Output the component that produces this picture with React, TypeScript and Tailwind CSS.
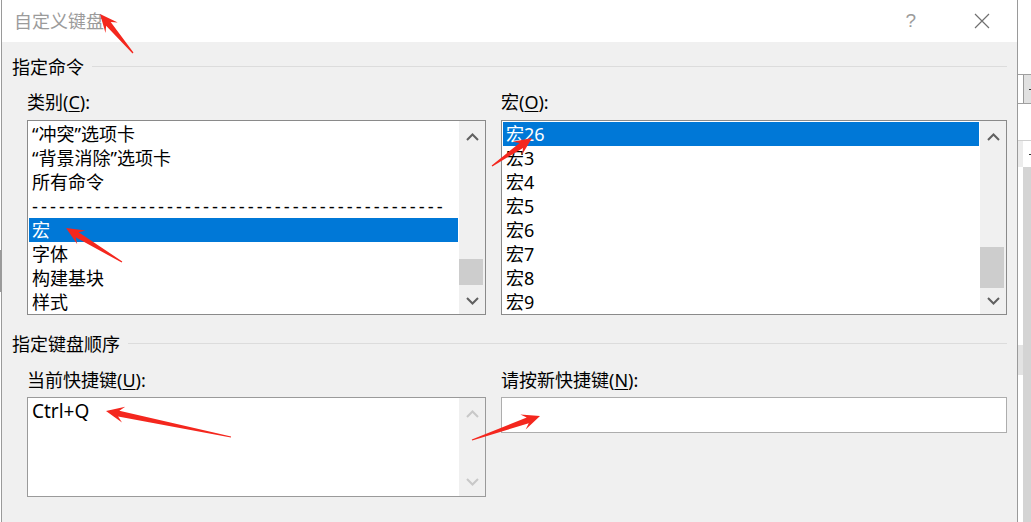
import React from "react";

const leftRows = [
  "“冲突”选项卡",
  "“背景消除”选项卡",
  "所有命令",
  "---",
  "宏",
  "字体",
  "构建基块",
  "样式",
];
const rightRows = ["宏26", "宏3", "宏4", "宏5", "宏6", "宏7", "宏8", "宏9"];

function Chevron({ up, color }: { up?: boolean; color: string }) {
  return (
    <svg width="13" height="8" viewBox="0 0 13 8">
      <path
        d={up ? "M1 7 L6.5 1.5 L12 7" : "M1 1 L6.5 6.5 L12 1"}
        fill="none"
        stroke={color}
        strokeWidth="2"
      />
    </svg>
  );
}

function ScrollBar({ thumbTop, thumbH }: { thumbTop: number; thumbH: number }) {
  return (
    <div className="w-[26px] bg-[#f0f0f0] flex flex-col">
      <div className="h-[32px] flex items-center justify-center">
        <Chevron up color="#606060" />
      </div>
      <div className="flex-1">
        <div className="w-[24px] bg-[#cdcdcd]" style={{ marginTop: thumbTop, height: thumbH }} />
      </div>
      <div className="h-[26px] flex items-center justify-center">
        <Chevron color="#606060" />
      </div>
    </div>
  );
}

function ListBox({
  rows,
  selected,
  thumbTop,
  thumbH,
}: {
  rows: string[];
  selected: number;
  thumbTop: number;
  thumbH: number;
}) {
  return (
    <div className="h-[195px] border border-[#8a8a8a] bg-white flex">
      <div className="flex-1 pt-px pl-px pr-px">
        {rows.map((r, i) => (
          <div
            key={i}
            className={
              i === selected
                ? "h-[24px] leading-[24px] pl-[3px] bg-[#0078d7] text-white whitespace-nowrap"
                : "h-[24px] leading-[24px] pl-[3px] whitespace-nowrap"
            }
          >
            {r === "---" ? (
              <span className="font-['Liberation_Sans',sans-serif] tracking-[3px]">
                {"-".repeat(46)}
              </span>
            ) : (
              r
            )}
          </div>
        ))}
      </div>
      <ScrollBar thumbTop={thumbTop} thumbH={thumbH} />
    </div>
  );
}

function GroupHeader({ label }: { label: string }) {
  return (
    <div className="ml-[10px] mr-[10px] h-[24px] flex items-center">
      <span className="leading-[24px]">{label}</span>
      <div className="flex-1 h-px bg-[#dcdcdc] ml-[8px] -mt-[2px]" />
    </div>
  );
}

function Arrow({ t, p }: { t: [number, number]; p: [number, number] }) {
  const dx = p[0] - t[0];
  const dy = p[1] - t[1];
  const L = Math.hypot(dx, dy);
  const ux = dx / L;
  const uy = dy / L;
  const nx = -uy;
  const ny = ux;
  const h = 18;
  const j = 13;
  const w1 = 3;
  const w2 = 8;
  const pt = (back: number, side: number, base: [number, number]) =>
    `${base[0] - ux * back + nx * side},${base[1] - uy * back + ny * side}`;
  const pts = [
    pt(0, 0.6, t),
    pt(j, w1, p),
    pt(h, w2, p),
    pt(0, 0, p),
    pt(h, -w2, p),
    pt(j, -w1, p),
    pt(0, -0.6, t),
  ].join(" ");
  return <polygon points={pts} fill="#f4271e" />;
}

export default function App() {
  return (
    <div className="w-[1031px] h-[522px] flex bg-white overflow-hidden relative font-['Noto_Sans','Noto_Sans_CJK_SC',sans-serif] text-[18px] text-black">
      {/* app behind, left edge */}
      <div className="w-px h-full flex flex-col">
        <div className="h-[250px]" />
        <div className="h-[42px] bg-[#9a9a9a]" />
      </div>

      {/* dialog */}
      <div className="w-[1017px] h-full border-x border-[#9a9a9a] bg-[#f0f0f0] flex flex-col">
        <div className="h-[42px] bg-white flex items-center pl-[12px]">
          <span className="text-[#9b9b9b] leading-[24px]">自定义键盘</span>
          <span className="ml-auto text-[#9b9b9b] font-light font-['Liberation_Sans',sans-serif] text-[19px] leading-[24px]">
            ?
          </span>
          <div className="ml-[58px] mr-[27px] flex items-center">
            <svg width="16" height="16" viewBox="0 0 16 16">
              <path d="M1 1 L15 15 M15 1 L1 15" stroke="#707070" strokeWidth="1.2" fill="none" />
            </svg>
          </div>
        </div>

        <div className="mt-[13px]">
          <GroupHeader label="指定命令" />
        </div>

        <div className="ml-[25px] flex gap-[15px] mt-[11px]">
          <div className="w-[459px] flex flex-col">
            <div className="h-[24px] leading-[24px]">
              类别(<span className="underline underline-offset-2">C</span>):
            </div>
            <div className="mt-[6px]">
              <ListBox rows={leftRows} selected={4} thumbTop={106} thumbH={26} />
            </div>
          </div>
          <div className="w-[506px] flex flex-col">
            <div className="h-[24px] leading-[24px]">
              宏(<span className="underline underline-offset-2">O</span>):
            </div>
            <div className="mt-[6px]">
              <ListBox rows={rightRows} selected={0} thumbTop={94} thumbH={41} />
            </div>
          </div>
        </div>

        <div className="mt-[17px]">
          <GroupHeader label="指定键盘顺序" />
        </div>

        <div className="ml-[25px] flex gap-[15px] mt-[12px]">
          <div className="w-[459px] flex flex-col">
            <div className="h-[24px] leading-[24px]">
              当前快捷键(<span className="underline underline-offset-2">U</span>):
            </div>
            <div className="mt-[5px] h-[100px] border border-[#9a9a9a] bg-white flex">
              <div className="flex-1 pt-px pl-[4px] leading-[24px] text-[19px]">Ctrl+Q</div>
              <div className="w-[26px] bg-[#f0f0f0] flex flex-col">
                <div className="h-[32px] flex items-center justify-center">
                  <Chevron up color="#c8c8c8" />
                </div>
                <div className="flex-1" />
                <div className="h-[28px] flex items-center justify-center">
                  <Chevron color="#c8c8c8" />
                </div>
              </div>
            </div>
          </div>
          <div className="w-[506px] flex flex-col">
            <div className="h-[24px] leading-[24px]">
              请按新快捷键(<span className="underline underline-offset-2">N</span>):
            </div>
            <div className="mt-[5px] h-[36px] border border-[#adadad] bg-white" />
          </div>
        </div>
      </div>

      {/* app behind, right edge */}
      <div className="w-[13px] h-full flex flex-col">
        <div className="h-[74px] bg-white" />
        <div className="h-[30px] border-y border-[#a0a0a0] flex">
          <div className="w-[5px] bg-white" />
          <div className="flex-1 bg-[#e1e1e1] border-l border-[#9a9a9a] flex items-center justify-end">
            <div className="w-[2px] h-px bg-[#333]" />
          </div>
        </div>
        <div className="h-[36px] bg-white" />
        <div className="h-px bg-[#d0d0d0]" />
        <div className="h-[26px] flex">
          <div className="w-[5px] bg-[#ececec]" />
          <div className="flex-1 bg-white flex items-center justify-end">
            <div className="w-[2px] h-px bg-[#333]" />
          </div>
        </div>
        <div className="flex-1 flex">
          <div className="w-[5px] flex flex-col">
            <div className="h-[178px]" />
            <div className="h-[30px] bg-[#e3e3e3]" />
          </div>
          <div className="flex-1 bg-[#d4d4d4]" />
        </div>
      </div>

      {/* annotation arrows */}
      <svg className="absolute inset-0 pointer-events-none" width="1031" height="522">
        <Arrow t={[133, 53]} p={[100, 14]} />
        <Arrow t={[122, 262]} p={[66, 228]} />
        <Arrow t={[492, 166]} p={[532, 138]} />
        <Arrow t={[231, 437]} p={[106, 411]} />
        <Arrow t={[472, 440]} p={[540, 416]} />
      </svg>
    </div>
  );
}
